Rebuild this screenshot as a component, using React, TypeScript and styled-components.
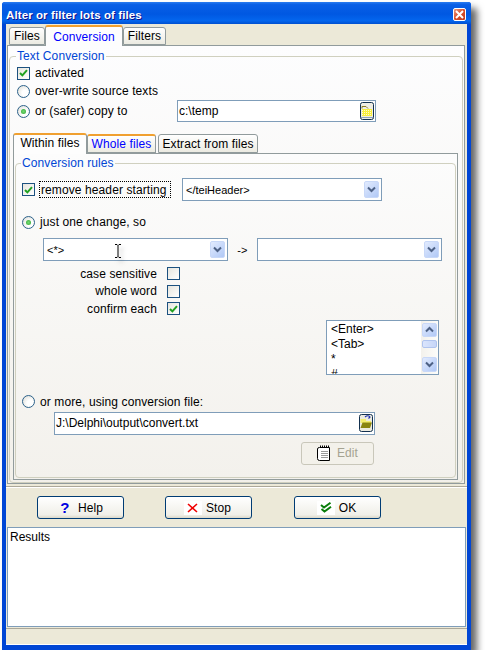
import styled, { createGlobalStyle } from "styled-components";

const GlobalStyle = createGlobalStyle`
  html, body {
    margin: 0;
    padding: 0;
    background: #fff;
  }
  body {
    font-family: "Liberation Sans", Arial, sans-serif;
    font-size: 12px;
    letter-spacing: 0.1px;
    color: #000;
  }
`;

const Chevron = ({ up }: { up?: boolean }) => (
  <svg width="9" height="7" viewBox="0 0 9 7">
    <path
      d={up ? "M1 5.5 L4.5 2 L8 5.5" : "M1 1.5 L4.5 5 L8 1.5"}
      fill="none"
      stroke="#4d6185"
      strokeWidth="2"
    />
  </svg>
);

const Tick = () => (
  <svg width="9" height="8" viewBox="0 0 9 8">
    <path d="M1 4 L3.4 6.4 L8 1.2" fill="none" stroke="#21a121" strokeWidth="2" />
  </svg>
);

const FolderClosed = () => (
  <svg width="14" height="18" viewBox="0 0 14 18">
    <rect x="0.5" y="0.5" width="13" height="17" rx="2" fill="#eeede4" stroke="#12304f" />
    <path d="M2 6.5 V4.5 H6 L8 6.5" fill="none" stroke="#8a7a20" />
    <rect x="2" y="7" width="10" height="7" fill="#f7ee3c" />
    <path d="M2 8.5 H12 M2 10.5 H12 M2 12.5 H12" stroke="#fffbd0" strokeDasharray="1 1" />
    <path d="M1 15.5 H13" stroke="#8fa4ba" />
  </svg>
);

const FolderOpen = () => (
  <svg width="14" height="18" viewBox="0 0 14 18">
    <rect x="0.5" y="0.5" width="13" height="17" rx="2" fill="#ecebe0" stroke="#12304f" />
    <path d="M6 3 Q9 0.5 11 3 L9.5 4.5" fill="none" stroke="#1a2fb0" strokeWidth="1.2" />
    <path d="M1.5 5 H7 V7 H12 V9 H1.5 Z" fill="#f4ee70" />
    <path d="M1.5 14 L3.5 8.5 H13 L11 14 Z" fill="#8a8510" />
  </svg>
);

const Notepad = () => (
  <svg width="14" height="17" viewBox="0 0 14 17">
    <path d="M2.5 2.5 H12.5 V15.5 H2.5 Q0.5 15.5 0.5 13.5 V4 Q0.5 2.5 2.5 2.5 Z" fill="#fff" stroke="#000" />
    <path d="M3.5 0.5 V3 M5.5 0.5 V3 M7.5 0.5 V3 M9.5 0.5 V3 M11.5 0.5 V3" stroke="#000" />
    <path d="M4 6.5 H11 M4 8.5 H11 M4 10.5 H11 M4 12.5 H11" stroke="#9a9a9a" />
  </svg>
);

const StopIcon = () => (
  <svg width="11" height="10" viewBox="0 0 11 10">
    <path d="M1 1 L10 9 M10 1 L1 9" fill="none" stroke="#f00000" strokeWidth="1.6" />
  </svg>
);

const DoubleTick = () => (
  <svg width="12" height="11" viewBox="0 0 12 11">
    <path d="M1 3 L4 5.5 L10.5 0.8 M1.5 7 L4.5 9.5 L11 4.8" fill="none" stroke="#0a7d0a" strokeWidth="2" />
  </svg>
);

const App = () => {
  return (
    <>
      <GlobalStyle />
      <Window>
        <TitleBar>
          <Title>Alter or filter lots of files</Title>
          <CloseButton>
            <svg width="9" height="9" viewBox="0 0 9 9">
              <path d="M1 1 L8 8 M8 1 L1 8" stroke="#fff" strokeWidth="2" />
            </svg>
          </CloseButton>
        </TitleBar>
        <Client>
          <TopTabs>
            <Tab $width={36} $marginLeft={3}>Files</Tab>
            <Tab $active $blue $width={78}>Conversion</Tab>
            <Tab $width={43}>Filters</Tab>
          </TopTabs>
          <TopPanel>
            <OuterGroup>
              <GroupLegend $left={3}>Text Conversion</GroupLegend>
              <OptionList>
                <OptionRow $height={18}>
                  <CheckBox $checked><Tick /></CheckBox>
                  activated
                </OptionRow>
                <OptionRow $height={18}>
                  <Radio />
                  over-write source texts
                </OptionRow>
                <OptionRow $height={22}>
                  <Radio $checked />
                  <CopyLabel>or (safer) copy to</CopyLabel>
                  <PathField $width={199}>
                    c:\temp
                    <FieldIcon><FolderClosed /></FieldIcon>
                  </PathField>
                </OptionRow>
              </OptionList>
              <InnerTabs>
                <InnerTab $active $width={74}>Within files</InnerTab>
                <InnerTab $blue $orange $width={69}>Whole files</InnerTab>
                <InnerTab $width={100} $marginLeft={2}>Extract from files</InnerTab>
              </InnerTabs>
              <InnerPanel>
                <RulesGroup>
                  <GroupLegend $left={-1}>Conversion rules</GroupLegend>
                  <RemoveRow>
                    <CheckBox $checked><Tick /></CheckBox>
                    <FocusLabel>remove header starting</FocusLabel>
                    <ComboBox $width={200} $marginLeft={11}>
                      &lt;/teiHeader&gt;
                      <ComboButton><Chevron /></ComboButton>
                    </ComboBox>
                  </RemoveRow>
                  <RadioRow $top={12}>
                    <Radio $checked />
                    just one change, so
                  </RadioRow>
                  <ChangeRow>
                    <ComboBox $width={185}>
                      &lt;*&gt;
                      <ComboButton><Chevron /></ComboButton>
                      <TextCursor>
                        <svg width="8" height="14" viewBox="0 0 8 14">
                          <path d="M1 0.5 H3 L4 1.5 L5 0.5 H7 M4 1.5 V12.5 M1 13.5 H3 L4 12.5 L5 13.5 H7" fill="none" stroke="#000" />
                        </svg>
                      </TextCursor>
                    </ComboBox>
                    <ArrowLabel>-&gt;</ArrowLabel>
                    <ComboBox $width={185}>
                      <ComboButton><Chevron /></ComboButton>
                    </ComboBox>
                  </ChangeRow>
                  <CheckGrid>
                    <CheckLabel>case sensitive</CheckLabel>
                    <CheckBox />
                    <CheckLabel>whole word</CheckLabel>
                    <CheckBox />
                    <CheckLabel>confirm each</CheckLabel>
                    <CheckBox $checked><Tick /></CheckBox>
                  </CheckGrid>
                  <ListBox>
                    <ListItems>
                      <div>&lt;Enter&gt;</div>
                      <div>&lt;Tab&gt;</div>
                      <div>*</div>
                      <div>#</div>
                    </ListItems>
                    <ScrollBar>
                      <ScrollButton><Chevron up /></ScrollButton>
                      <ScrollThumb />
                      <ScrollTrack />
                      <ScrollButton $tall><Chevron /></ScrollButton>
                    </ScrollBar>
                  </ListBox>
                  <RadioRow $top={18}>
                    <Radio />
                    or more, using conversion file:
                  </RadioRow>
                  <FileRow>
                    <PathField $width={321} $height={23}>
                      J:\Delphi\output\convert.txt
                      <FieldIcon><FolderOpen /></FieldIcon>
                    </PathField>
                  </FileRow>
                  <EditRow>
                    <EditButton>
                      <Notepad />
                      Edit
                    </EditButton>
                  </EditRow>
                </RulesGroup>
              </InnerPanel>
            </OuterGroup>
          </TopPanel>
          <ButtonBar>
            <ActionButton $marginLeft={31}>
              <HelpMark>?</HelpMark>
              Help
            </ActionButton>
            <ActionButton $marginLeft={41}>
              <IconChip><StopIcon /></IconChip>
              Stop
            </ActionButton>
            <ActionButton $marginLeft={42}>
              <IconChip><DoubleTick /></IconChip>
              OK
            </ActionButton>
          </ButtonBar>
          <ResultsBox>Results</ResultsBox>
          <StatusBar />
        </Client>
      </Window>
    </>
  );
};

export default App;

const Window = styled.div`
  position: relative;
  box-sizing: border-box;
  width: 469px;
  height: 648px;
  margin: 2px 0 0 2px;
  display: flex;
  flex-direction: column;
  background: #0046d5;
  border-radius: 3px 3px 0 0;
  box-shadow: 6px 6px 7px rgba(0, 0, 0, 0.6);
`;
const TitleBar = styled.div`
  box-sizing: border-box;
  height: 22px;
  padding: 3px 5px 0 4px;
  display: flex;
  align-items: center;
  justify-content: space-between;
  background: linear-gradient(#2a7cf0 0, #0a5fe6 12%, #0058e2 55%, #0466ee 85%, #0050d0 100%);
  border-radius: 3px 3px 0 0;
`;
const Title = styled.div`
  font-family: "Liberation Sans", Arial, sans-serif;
  font-size: 11.5px;
  font-weight: 700;
  color: #fff;
  text-shadow: 1px 1px 0 #0f1089;
`;
const CloseButton = styled.div`
  box-sizing: border-box;
  width: 13px;
  height: 13px;
  display: flex;
  align-items: center;
  justify-content: center;
  border: 1px solid #fff;
  border-radius: 2px;
  background: linear-gradient(135deg, #e89a80, #d8502c 50%, #c03a1c);
`;
const Client = styled.div`
  flex: 1;
  margin: 0 4px 5px 4px;
  display: flex;
  flex-direction: column;
  background: #ece9d8;
  min-height: 0;
`;
const TopTabs = styled.div`
  height: 21px;
  display: flex;
  align-items: flex-end;
  position: relative;
  z-index: 1;
`;
const Tab = styled.div<{ $active?: boolean; $blue?: boolean; $width: number; $marginLeft?: number }>`
  box-sizing: border-box;
  width: ${(p) => p.$width}px;
  height: ${(p) => (p.$active ? 21 : 18)}px;
  margin-left: ${(p) => p.$marginLeft ?? 0}px;
  margin-bottom: ${(p) => (p.$active ? -1 : 0)}px;
  display: flex;
  align-items: center;
  justify-content: center;
  border: 1px solid #919b9c;
  border-bottom: ${(p) => (p.$active ? "none" : "1px solid #919b9c")};
  border-top: ${(p) => (p.$active ? "2px solid #f0a030" : "1px solid #919b9c")};
  border-radius: 3px 3px 0 0;
  background: ${(p) => (p.$active ? "#fdfdfd" : "linear-gradient(#ffffff, #ecebe2)")};
  color: ${(p) => (p.$blue ? "#0000ff" : "#000")};
`;
const TopPanel = styled.div`
  box-sizing: border-box;
  margin-left: 1px;
  width: 458px;
  height: 439px;
  padding: 3px 1px 0 1px;
  border: 1px solid #919b9c;
  background: linear-gradient(#fdfdfe, #f2f0ea);
`;
const OuterGroup = styled.fieldset`
  box-sizing: border-box;
  height: 434px;
  margin: 0;
  padding: 0 4px 0 3px;
  min-width: 0;
  border: 1px solid #d0d0bf;
  border-radius: 4px;
`;
const GroupLegend = styled.legend<{ $left: number }>`
  height: 14px;
  line-height: 14px;
  margin-left: ${(p) => p.$left}px;
  padding: 0 1px;
  color: #0046d5;
  font-size: 12px;
`;
const OptionList = styled.div`
  margin: 1px 0 0 4px;
`;
const OptionRow = styled.div<{ $height: number }>`
  height: ${(p) => p.$height}px;
  display: flex;
  align-items: center;
  gap: 5px;
`;
const CopyLabel = styled.span`
  width: 137px;
`;
const CheckBox = styled.span<{ $checked?: boolean }>`
  box-sizing: border-box;
  flex: none;
  width: 13px;
  height: 13px;
  display: inline-flex;
  align-items: center;
  justify-content: center;
  border: 1px solid #1c5180;
  background: linear-gradient(135deg, #e6e5de, #ffffff);
`;
const Radio = styled.span<{ $checked?: boolean }>`
  box-sizing: border-box;
  flex: none;
  position: relative;
  width: 13px;
  height: 13px;
  border-radius: 50%;
  border: 1px solid #2c628b;
  background: radial-gradient(circle at 65% 65%, #ffffff 30%, #d8d8d0 100%);
  &::after {
    content: "";
    display: ${(p) => (p.$checked ? "block" : "none")};
    position: absolute;
    left: 3px;
    top: 3px;
    width: 5px;
    height: 5px;
    border-radius: 50%;
    background: radial-gradient(circle, #6fd86f 10%, #2da02d 100%);
  }
`;
const PathField = styled.div<{ $width: number; $height?: number }>`
  box-sizing: border-box;
  position: relative;
  width: ${(p) => p.$width}px;
  height: ${(p) => p.$height ?? 22}px;
  padding-left: 1px;
  display: flex;
  align-items: center;
  letter-spacing: 0;
  border: 1px solid #7f9db9;
  background: #fff;
`;
const FieldIcon = styled.span`
  position: absolute;
  right: 1px;
  top: 1px;
  display: flex;
`;
const InnerTabs = styled.div`
  height: 20px;
  margin-top: 11px;
  display: flex;
  align-items: flex-end;
  position: relative;
  z-index: 1;
`;
const InnerTab = styled.div<{ $active?: boolean; $blue?: boolean; $orange?: boolean; $width: number; $marginLeft?: number }>`
  box-sizing: border-box;
  width: ${(p) => p.$width}px;
  height: ${(p) => (p.$active ? 21 : 19)}px;
  margin-left: ${(p) => p.$marginLeft ?? 0}px;
  margin-bottom: ${(p) => (p.$active ? -1 : 0)}px;
  padding-bottom: ${(p) => (p.$active ? 3 : 0)}px;
  display: flex;
  align-items: center;
  justify-content: center;
  border: 1px solid #919b9c;
  border-bottom: ${(p) => (p.$active ? "none" : "1px solid #919b9c")};
  border-top: ${(p) => (p.$active || p.$orange ? "2px solid #f0a030" : "1px solid #919b9c")};
  border-radius: 3px 3px 0 0;
  background: ${(p) => (p.$active ? "#fdfdfd" : "linear-gradient(#ffffff, #ecebe2)")};
  color: ${(p) => (p.$blue ? "#0000ff" : "#000")};
`;
const InnerPanel = styled.div`
  box-sizing: border-box;
  height: 327px;
  padding: 2px 1px 0 1px;
  border: 1px solid #919b9c;
  background: linear-gradient(#fcfcfc, #f3f1ec);
`;
const RulesGroup = styled.fieldset`
  box-sizing: border-box;
  height: 322px;
  margin: 0;
  padding: 0 6px;
  min-width: 0;
  border: 1px solid #d0d0bf;
  border-radius: 4px;
`;
const RemoveRow = styled.div`
  height: 23px;
  margin-top: 8px;
  display: flex;
  align-items: center;
`;
const FocusLabel = styled.span`
  box-sizing: border-box;
  width: 132px;
  height: 17px;
  margin-left: 4px;
  padding-left: 1px;
  display: flex;
  align-items: center;
  white-space: nowrap;
  border: 1px dotted #000;
`;
const ComboBox = styled.div<{ $width: number; $marginLeft?: number }>`
  box-sizing: border-box;
  position: relative;
  width: ${(p) => p.$width}px;
  height: 23px;
  margin-left: ${(p) => p.$marginLeft ?? 0}px;
  padding-left: 3px;
  display: flex;
  align-items: center;
  font-size: 11px;
  letter-spacing: 0;
  border: 1px solid #7f9db9;
  background: #fff;
`;
const ComboButton = styled.span`
  position: absolute;
  right: 2px;
  top: 2px;
  box-sizing: border-box;
  width: 15px;
  height: 17px;
  display: flex;
  align-items: center;
  justify-content: center;
  border-radius: 2px;
  background: linear-gradient(135deg, #e2ebfe, #b0c8f6);
  border: 1px solid #c8d8f8;
`;
const TextCursor = styled.span`
  position: absolute;
  left: 70px;
  top: 5px;
  display: flex;
  filter: drop-shadow(3px 4px 2px rgba(0, 0, 0, 0.25));
`;
const RadioRow = styled.div<{ $top: number }>`
  height: 18px;
  margin-top: ${(p) => p.$top}px;
  display: flex;
  align-items: center;
  gap: 5px;
`;
const ChangeRow = styled.div`
  margin: 7px 0 0 21px;
  display: flex;
  align-items: center;
`;
const ArrowLabel = styled.span`
  width: 29px;
  text-align: center;
  font-size: 11px;
`;
const CheckGrid = styled.div`
  margin-top: 4px;
  display: grid;
  grid-template-columns: 135px 13px;
  grid-auto-rows: 17.6px;
  column-gap: 10px;
  align-items: center;
`;
const CheckLabel = styled.span`
  text-align: right;
`;
const ListBox = styled.div`
  box-sizing: border-box;
  width: 113px;
  height: 55px;
  margin: 2px 0 0 304px;
  display: flex;
  justify-content: space-between;
  border: 1px solid #7f9db9;
  background: #fff;
  overflow: hidden;
`;
const ListItems = styled.div`
  padding: 1px 0 0 4px;
  line-height: 15px;
  font-size: 12px;
  letter-spacing: 0;
`;
const ScrollBar = styled.div`
  width: 17px;
  padding: 2px 1px;
  box-sizing: border-box;
  display: flex;
  flex-direction: column;
  background: linear-gradient(90deg, #f3f1ec, #fdfdfa);
`;
const ScrollButton = styled.span<{ $tall?: boolean }>`
  box-sizing: border-box;
  flex: none;
  height: ${(p) => (p.$tall ? 15 : 14)}px;
  display: flex;
  align-items: center;
  justify-content: center;
  border-radius: 2px;
  border: 1px solid #c8d8f8;
  background: linear-gradient(135deg, #e2ebfe, #b0c8f6);
`;
const ScrollThumb = styled.span`
  box-sizing: border-box;
  flex: none;
  height: 8px;
  margin-top: 3px;
  border-radius: 2px;
  border: 1px solid #b0c4ee;
  background: linear-gradient(90deg, #dbe5fc, #c6d6f8);
`;
const ScrollTrack = styled.span`
  flex: 1;
`;
const FileRow = styled.div`
  margin: 1px 0 0 32px;
`;
const EditRow = styled.div`
  margin: 7px 0 0 279px;
`;
const EditButton = styled.div`
  box-sizing: border-box;
  width: 73px;
  height: 23px;
  display: flex;
  align-items: center;
  justify-content: center;
  gap: 6px;
  color: #a5a391;
  border: 1px solid #c9c7ba;
  border-radius: 3px;
  background: #f3f1ea;
`;
const ButtonBar = styled.div`
  box-sizing: border-box;
  height: 41px;
  margin-top: 2px;
  padding-top: 9px;
  display: flex;
  align-items: flex-start;
  border-top: 1px solid #aca899;
  box-shadow: inset 0 1px 0 #fff;
`;
const ActionButton = styled.div<{ $marginLeft: number }>`
  box-sizing: border-box;
  width: 87px;
  height: 23px;
  margin-left: ${(p) => p.$marginLeft}px;
  padding-right: 2px;
  display: flex;
  align-items: center;
  justify-content: center;
  gap: 4px;
  border: 1px solid #003c74;
  border-radius: 3px;
  background: linear-gradient(#ffffff, #f0efe8 85%, #dcd8c8);
`;
const HelpMark = styled.span`
  width: 18px;
  text-align: center;
  color: #0000e0;
  font-size: 15px;
  font-weight: 700;
  line-height: 1;
`;
const IconChip = styled.span`
  width: 18px;
  height: 14px;
  display: flex;
  align-items: center;
  justify-content: center;
  background: #fff;
`;
const ResultsBox = styled.div`
  box-sizing: border-box;
  height: 100px;
  margin: 0 1px;
  padding: 2px;
  letter-spacing: 0;
  border: 1px solid #7f9db9;
  background: #fff;
`;
const StatusBar = styled.div`
  flex: 1;
  margin-top: 1px;
  border-top: 1px solid #aca899;
  border-bottom: 1px solid #fff;
`;
